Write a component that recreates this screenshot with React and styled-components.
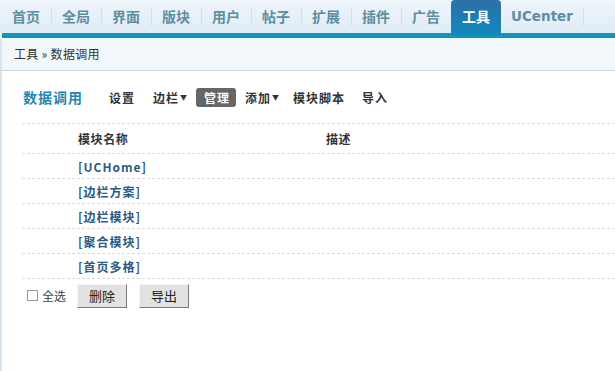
import React from "react";
import styled, { createGlobalStyle } from "styled-components";

const GlobalStyle = createGlobalStyle`
  html, body {
    margin: 0;
    padding: 0;
    background: #fff;
    overflow: hidden;
  }
  body {
    font-family: "Noto Sans CJK SC", "Liberation Sans", sans-serif;
    font-size: 12px;
    color: #333;
  }
`;

const Page = styled.div`
  width: 615px;
  height: 371px;
  display: flex;
  flex-direction: column;
`;

const Nav = styled.div`
  height: 33px;
  display: flex;
  align-items: flex-end;
  padding-left: 1px;
  background: linear-gradient(#eef5fb, #dfecf5);
`;

const Tab = styled.div`
  position: relative;
  height: ${(p) => (p.$active ? "35px" : "33px")};
  margin-bottom: ${(p) => (p.$active ? "-2px" : "0")};
  padding: 0 ${(p) => (p.$latin ? "10px" : "11px")};
  line-height: 33px;
  font-family: ${(p) =>
    p.$latin ? '"DejaVu Sans", sans-serif' : "inherit"};
  font-size: ${(p) => (p.$latin ? "13.5px" : "14px")};
  font-weight: bold;
  color: ${(p) => (p.$active ? "#fff" : "#5d8ea2")};
  background: ${(p) =>
    p.$active ? "linear-gradient(#2c6fa7, #1189bd)" : "transparent"};
  border-radius: ${(p) => (p.$active ? "4px 4px 0 0" : "0")};
  z-index: 1;
  &::after {
    content: "";
    display: ${(p) => (p.$sep ? "block" : "none")};
    position: absolute;
    right: -1px;
    top: 8px;
    height: 18px;
    width: 1px;
    background: #cfe0ec;
  }
`;

const Bar = styled.div`
  height: 5px;
  margin-left: 2px;
  background: #1592b8;
`;

const Body = styled.div`
  flex: 1;
  border-left: 2px solid #d6e5f0;
  display: flex;
  flex-direction: column;
`;

const Crumb = styled.div`
  height: 32px;
  line-height: 32px;
  padding-left: 12px;
  background: #f1f7fb;
  border-bottom: 1px solid #c6d8e4;
  color: #333;
  font-size: 12px;
  letter-spacing: 0.3px;
`;

const Content = styled.div`
  padding-left: 20px;
`;

const Toolbar = styled.div`
  height: 52px;
  display: flex;
  align-items: center;
`;

const Title = styled.h3`
  margin: 0 26px 0 1px;
  font-size: 14px;
  font-weight: bold;
  letter-spacing: 1px;
  color: #2587b4;
`;

const MenuItem = styled.span`
  font-weight: bold;
  font-size: 12px;
  letter-spacing: 1px;
  color: ${(p) => (p.$active ? "#fff" : "#333")};
  background: ${(p) => (p.$active ? "#666" : "transparent")};
  border-radius: 3px;
  padding: ${(p) => (p.$active ? "0 6px 0 8px" : "0")};
  line-height: 19px;
  margin-right: ${(p) => p.$mr}px;
`;

const Caret = styled.span`
  font-size: 7px;
  margin-left: 1px;
  vertical-align: 3px;
`;

const Row = styled.div`
  display: flex;
  align-items: center;
  height: ${(p) => (p.$head ? "29px" : "24px")};
  border-top: 1px dashed #dcdcdc;
  padding-left: 56px;
  font-weight: bold;
  font-size: 12px;
`;

const NameCell = styled.span`
  width: 248px;
  color: #333;
  letter-spacing: 0.6px;
`;

const HeadCell = styled.span`
  color: #333;
  letter-spacing: 0.6px;
`;

const Link = styled.a`
  color: #2b5a82;
  text-decoration: none;
  letter-spacing: 1px;
`;

const Footer = styled.div`
  border-top: 1px dashed #dcdcdc;
  display: flex;
  align-items: center;
  height: 33px;
  padding-left: 5px;
`;

const Check = styled.span`
  width: 9px;
  height: 9px;
  border: 1px solid #999;
  background: #fff;
  margin-right: 4px;
`;

const CheckLabel = styled.span`
  color: #444;
  margin-right: 11px;
`;

const Button = styled.button`
  width: 50px;
  height: 24px;
  margin-right: 12px;
  padding: 0;
  font-family: inherit;
  font-size: 13px;
  color: #222;
  background: #e2e2e2;
  border: 1px solid;
  border-color: #f4f4f4 #7a7a7a #7a7a7a #f4f4f4;
`;

const tabs = ["首页", "全局", "界面", "版块", "用户", "帖子", "扩展", "插件", "广告", "工具", "UCenter"];

const rows = ["[UCHome]", "[边栏方案]", "[边栏模块]", "[聚合模块]", "[首页多格]"];

export default function App() {
  return (
    <Page>
      <GlobalStyle />
      <Nav>
        {tabs.map((t, i) => (
          <Tab
            key={t}
            $active={t === "工具"}
            $sep={t !== "工具" && tabs[i + 1] !== "工具"}
            $latin={t === "UCenter"}
          >
            {t}
          </Tab>
        ))}
      </Nav>
      <Bar />
      <Body>
        <Crumb>工具 » 数据调用</Crumb>
        <Content>
          <Toolbar>
            <Title>数据调用</Title>
            <MenuItem $mr={18}>设置</MenuItem>
            <MenuItem $mr={8}>
              边栏<Caret>▼</Caret>
            </MenuItem>
            <MenuItem $active $mr={9}>管理</MenuItem>
            <MenuItem $mr={13}>
              添加<Caret>▼</Caret>
            </MenuItem>
            <MenuItem $mr={17}>模块脚本</MenuItem>
            <MenuItem $mr={0}>导入</MenuItem>
          </Toolbar>
          <Row $head>
            <NameCell>模块名称</NameCell>
            <HeadCell>描述</HeadCell>
          </Row>
          {rows.map((r) => (
            <Row key={r}>
              <Link href="#">{r}</Link>
            </Row>
          ))}
          <Footer>
            <Check />
            <CheckLabel>全选</CheckLabel>
            <Button>删除</Button>
            <Button>导出</Button>
          </Footer>
        </Content>
      </Body>
    </Page>
  );
}
